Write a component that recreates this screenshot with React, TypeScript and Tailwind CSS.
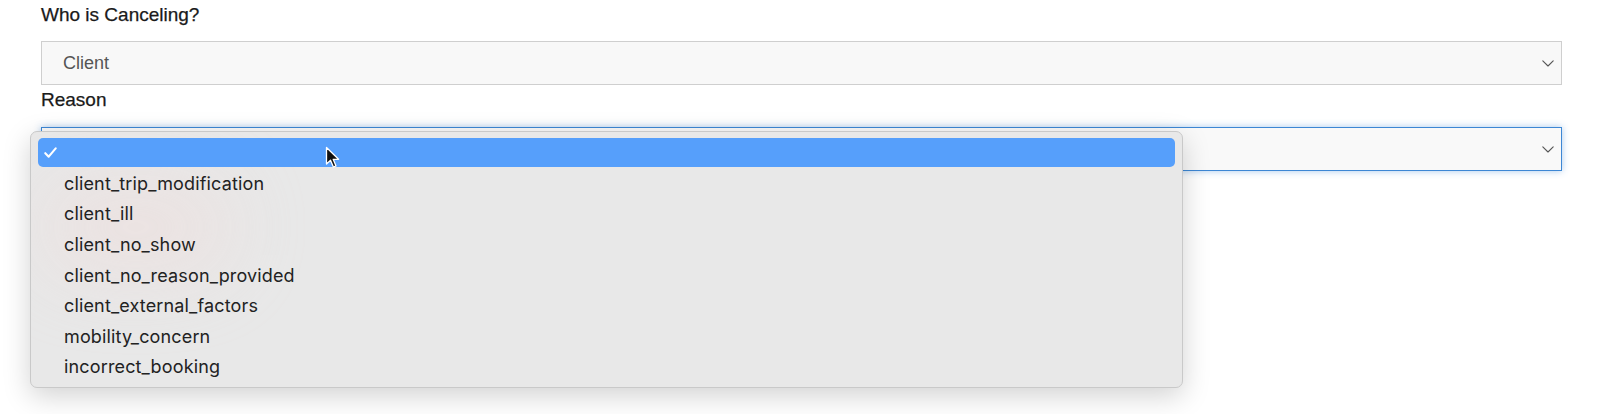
const reasons = [
  "client_trip_modification",
  "client_ill",
  "client_no_show",
  "client_no_reason_provided",
  "client_external_factors",
  "mobility_concern",
  "incorrect_booking",
]

function Chevron() {
  return (
    <svg width="12" height="7" viewBox="0 0 12 7" fill="none" className="shrink-0">
      <path d="M0.8 0.8l5.2 5.2 5.2-5.2" stroke="#555" strokeWidth="1.1" strokeLinecap="round" strokeLinejoin="round" />
    </svg>
  )
}

function Cursor() {
  return (
    <svg width="16" height="24" viewBox="0 0 16 24" className="absolute left-[325px] top-[146px]">
      <path
        d="M1.5 1.5 L1.5 18 L5.5 14.3 L8.4 21 L11 19.9 L8.2 13.3 L13.6 13.3 Z"
        fill="#111"
        stroke="#fff"
        strokeWidth="1.3"
        strokeLinejoin="round"
      />
    </svg>
  )
}

export default function App() {
  return (
    <div className="relative w-[1600px] h-[414px] bg-white overflow-hidden font-['Liberation_Sans',Arial,sans-serif]">
      <div className="pl-[41px] pr-[38px] pt-[3px]">
        <div className="h-[38px] text-[19px] text-[#1a1a1a] leading-[24px] [-webkit-text-stroke:0.25px_#1a1a1a]">Who is Canceling?</div>
        <div className="h-[44px] flex items-center justify-between bg-[#f8f8f8] border border-[#cfcfcf] pl-[21px] pr-[7px]">
          <span className="text-[18px] text-[#555]">Client</span>
          <Chevron />
        </div>
        <div className="h-[42px] pt-[3px] text-[19px] text-[#1a1a1a] leading-[24px] [-webkit-text-stroke:0.25px_#1a1a1a]">Reason</div>
        <div className="h-[44px] flex items-center justify-end bg-[#f9f9f9] border border-[#3d87d4] pr-[7px] shadow-[0_0_7px_rgba(61,135,212,0.45)]">
          <Chevron />
        </div>
      </div>

      {/* open native select menu */}
      <div className="absolute left-[30px] top-[131px] w-[1153px] h-[257px] rounded-[7px] bg-[#e8e8e8] border border-[#c9c9c9] shadow-[0_8px_28px_rgba(0,0,0,0.18)] px-[7px] pt-[6px] font-['Inter','Noto_Sans',sans-serif] overflow-hidden">
        <div className="absolute left-[10px] top-[50px] w-[190px] h-[90px] rounded-full bg-[#f3d9d6] opacity-40 blur-2xl" />
        <div className="relative h-[29px] rounded-[5px] bg-[#569ffb] flex items-center pl-[6px]">
          <svg width="13" height="11" viewBox="0 0 13 11" fill="none">
            <path d="M1.3 6.2l3.4 3.5L11.7 1.3" stroke="#fff" strokeWidth="2.1" strokeLinecap="round" strokeLinejoin="round" />
          </svg>
        </div>
        <div className="relative pt-[1px]">
          {reasons.map((r) => (
            <div key={r} className="h-[30.6px] flex items-center pl-[26px] text-[18px] text-[#222] tracking-[0.15px]">
              {r}
            </div>
          ))}
        </div>
      </div>

      <Cursor />
    </div>
  )
}
